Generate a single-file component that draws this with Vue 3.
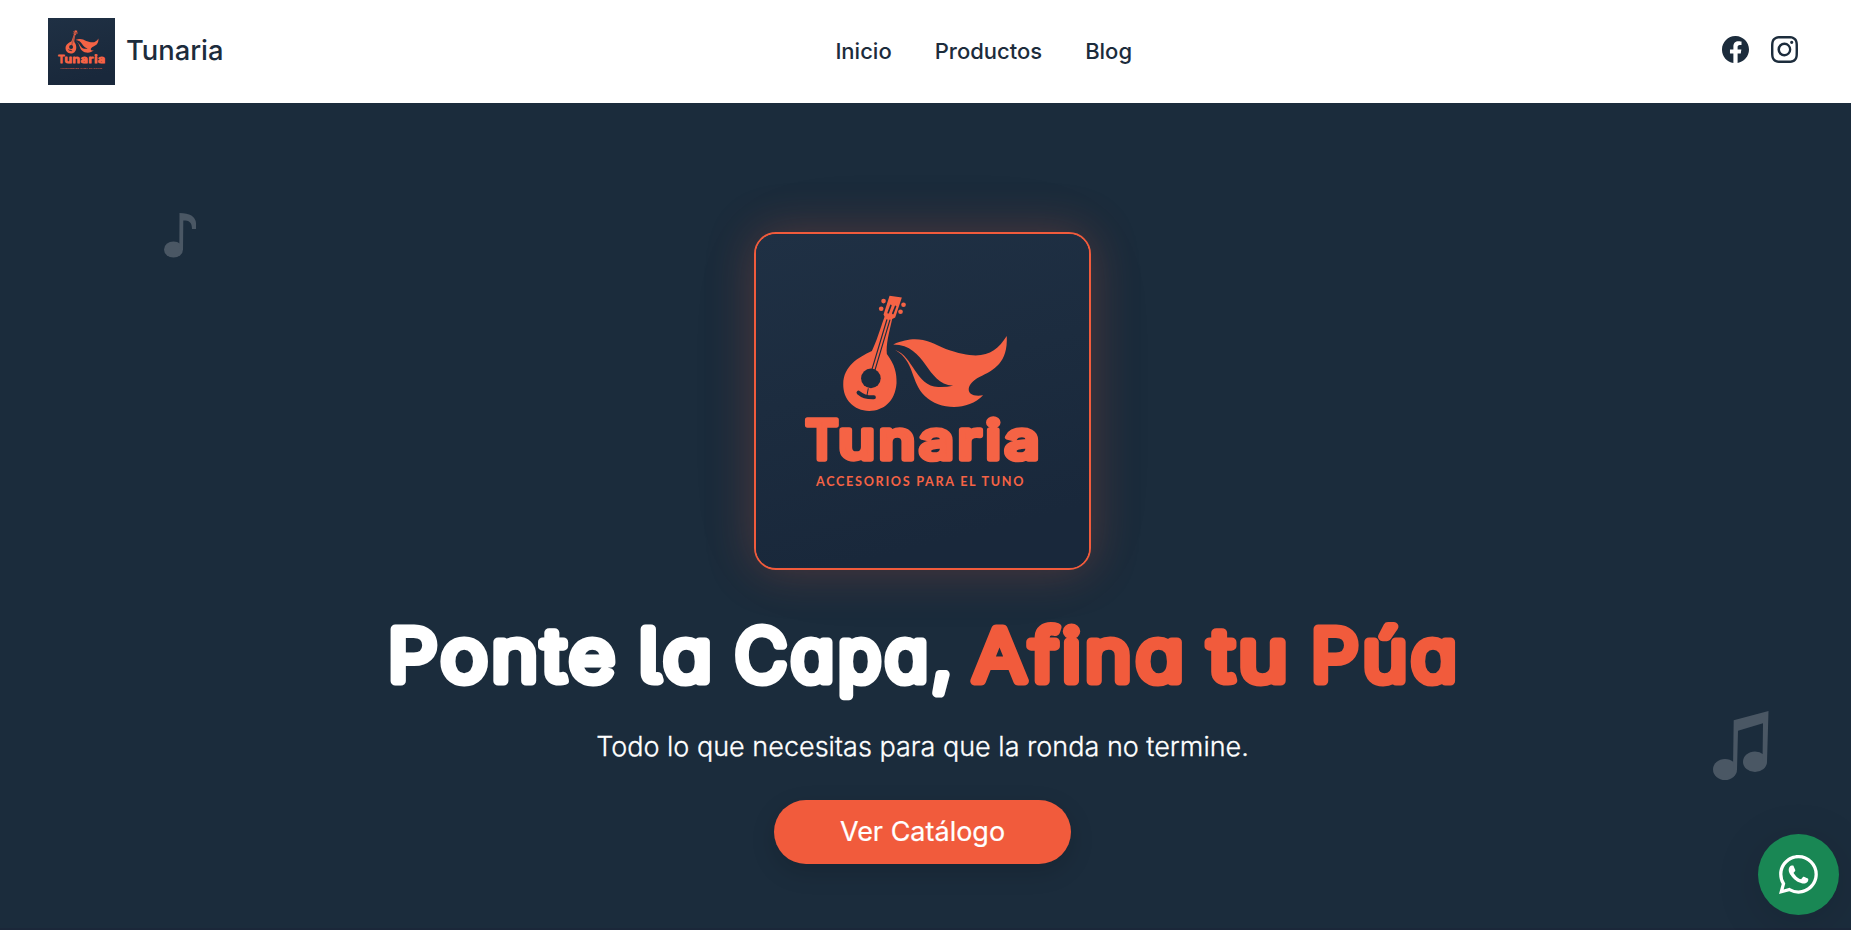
<script setup>
import { ref } from 'vue'

const links = ref(['Inicio', 'Productos', 'Blog'])

// Words of the hero title with their place on the title's baseline
const titleWords = [
  { text: 'Ponte', x: 15, width: 231 },
  { text: 'la', x: 266, width: 77 },
  { text: 'Capa,', x: 362, width: 221 },
  { text: 'Afina', x: 600, width: 215, accent: true },
  { text: 'tu', x: 836, width: 83, accent: true },
  { text: 'Púa', x: 938, width: 150, accent: true }
]
</script>

<template>
  <div class="page">
    <!-- Logo artwork shared by the navbar and the hero -->
    <svg class="defs" width="0" height="0" aria-hidden="true">
      <defs>
        <linearGradient id="logo-bg" x1="0" y1="0" x2="0.25" y2="1">
          <stop offset="0" stop-color="#1f3044" />
          <stop offset="0.5" stop-color="#1c2c3f" />
          <stop offset="1" stop-color="#19283b" />
        </linearGradient>
        <symbol id="logo" viewBox="0 0 1000 1000">
          <rect width="1000" height="1000" fill="url(#logo-bg)" />
          <g fill="#f56345">
            <path d="M401 184L438 189L418 249L409 254C399 298 390 330 393 359C417 391 423 417 422 447C418 501 383 530 340 530C293 529 261 495 262 449C263 395 306 370 348 350C362 321 371 289 386 247L383 240Z" />
            <circle cx="383" cy="200" r="7" /><circle cx="376" cy="223" r="7" />
            <circle cx="443" cy="211" r="7" /><circle cx="434" cy="232" r="7" />
            <path d="M412 330C484 299 520 321 570 344C677 382 717 361 753 305C757 386 715 407 671 428C627 450 626 492 682 483C636 531 552 528 507 485C464 444 477 380 418 347C472 365 480 456 547 458Q571 459 592 454C508 447 514 332 412 330Z" />
            <text x="148" y="675" class="logo-name" textLength="100" lengthAdjust="spacingAndGlyphs">T</text>
            <text x="246" y="675" class="logo-name spaced" textLength="616" lengthAdjust="spacingAndGlyphs">unaria</text>
            <text x="180" y="755" class="logo-tag" textLength="623">ACCESORIOS PARA EL TUNO</text>
          </g>
          <g fill="none" stroke="#1c2c3f" stroke-linecap="round">
            <path d="M405 213L397 235M419 216L411 237" stroke-width="5" />
            <path d="M393 256L348 406M402 257L357 408" stroke-width="3.5" />
            <path d="M337 463L333 485" stroke-width="3" />
            <path d="M308 475Q325 490 354 489" stroke-width="12" />
          </g>
          <circle cx="345" cy="432" r="29.500" fill="#1c2c3f" />
        </symbol>
      </defs>
    </svg>

    <header class="navbar">
      <a class="brand">
        <svg class="brand-logo"><use href="#logo" /></svg>
        <span>Tunaria</span>
      </a>
      <nav class="nav-links">
        <a v-for="link in links" :key="link">{{ link }}</a>
      </nav>
      <div class="social">
        <svg viewBox="0 0 16 16" fill="currentColor">
          <path d="M16 8.049c0-4.446-3.582-8.05-8-8.05C3.58 0-.002 3.603-.002 8.05c0 4.017 2.926 7.347 6.75 7.951v-5.625h-2.03V8.05H6.75V6.275c0-2.017 1.195-3.131 3.022-3.131.876 0 1.791.157 1.791.157v1.98h-1.009c-.993 0-1.303.621-1.303 1.258v1.51h2.218l-.354 2.326H9.25V16c3.824-.604 6.75-3.934 6.75-7.951" />
        </svg>
        <svg viewBox="0 0 16 16" fill="currentColor">
          <path d="M8 0C5.829 0 5.556.01 4.703.048 3.85.088 3.269.222 2.76.42a3.9 3.9 0 0 0-1.417.923A3.9 3.9 0 0 0 .42 2.76C.222 3.268.087 3.85.048 4.7.01 5.555 0 5.827 0 8.001c0 2.172.01 2.444.048 3.297.04.852.174 1.433.372 1.942.205.526.478.972.923 1.417.444.445.89.719 1.416.923.51.198 1.09.333 1.942.372C5.555 15.99 5.827 16 8 16s2.444-.01 3.298-.048c.851-.04 1.434-.174 1.943-.372a3.9 3.9 0 0 0 1.416-.923c.445-.445.718-.891.923-1.417.197-.509.332-1.09.372-1.942C15.99 10.445 16 10.173 16 8s-.01-2.445-.048-3.299c-.04-.851-.175-1.433-.372-1.941a3.9 3.9 0 0 0-.923-1.417A3.9 3.9 0 0 0 13.24.42c-.51-.198-1.092-.333-1.943-.372C10.443.01 10.172 0 7.998 0zm-.717 1.442h.718c2.136 0 2.389.007 3.232.046.78.035 1.204.166 1.486.275.373.145.64.319.92.599s.453.546.598.92c.11.281.24.705.275 1.485.039.843.047 1.096.047 3.231s-.008 2.389-.047 3.232c-.035.78-.166 1.203-.275 1.485a2.5 2.5 0 0 1-.599.919c-.28.28-.546.453-.92.598-.28.11-.704.24-1.485.276-.843.038-1.096.047-3.232.047s-2.39-.009-3.233-.047c-.78-.036-1.203-.166-1.485-.276a2.5 2.5 0 0 1-.92-.598 2.5 2.5 0 0 1-.6-.92c-.109-.281-.24-.705-.275-1.485-.038-.843-.046-1.096-.046-3.233s.008-2.388.046-3.231c.036-.78.166-1.204.276-1.486.145-.373.319-.64.599-.92s.546-.453.92-.598c.282-.11.705-.24 1.485-.276.738-.034 1.024-.044 2.515-.045zm4.988 1.328a.96.96 0 1 0 0 1.92.96.96 0 0 0 0-1.92m-4.27 1.122a4.109 4.109 0 1 0 0 8.217 4.109 4.109 0 0 0 0-8.217m0 1.441a2.667 2.667 0 1 1 0 5.334 2.667 2.667 0 0 1 0-5.334" />
        </svg>
      </div>
    </header>

    <main class="hero">
      <svg class="note note-single" viewBox="0 0 34 48" fill="currentColor">
        <ellipse cx="10.500" cy="37.500" rx="9.500" ry="8" />
        <path d="M16.500 1Q32 1 33 11V17H29C29 10 26 8.500 20.300 8.500L20 38H16.300Z" />
      </svg>
      <svg class="note note-double" viewBox="0 0 56 70" fill="currentColor">
        <ellipse cx="12" cy="58.500" rx="12" ry="10.500" />
        <ellipse cx="42" cy="50.700" rx="12" ry="10.300" />
        <path d="M20.700 9.300L55.500 0L54 51H49.500L50 12.300L25 19.700L24 59H20Z" />
      </svg>

      <svg class="hero-logo"><use href="#logo" /></svg>

      <h1 class="title">
        <svg viewBox="0 0 1100 104">
          <text
            v-for="word in titleWords"
            :key="word.text"
            :x="word.x"
            y="70"
            :textLength="word.width"
            lengthAdjust="spacingAndGlyphs"
            :class="{ accent: word.accent }"
          >{{ word.text }}</text>
        </svg>
      </h1>
      <p class="lead">Todo lo que necesitas para que la ronda no termine.</p>
      <a class="cta">Ver Catálogo</a>
    </main>

    <section class="next-section"></section>

    <a class="whatsapp">
      <svg viewBox="0 0 16 16" fill="currentColor">
        <path d="M13.601 2.326A7.85 7.85 0 0 0 7.994 0C3.627 0 .068 3.558.064 7.926c0 1.399.366 2.76 1.057 3.965L0 16l4.204-1.102a7.9 7.9 0 0 0 3.79.965h.004c4.368 0 7.926-3.558 7.93-7.93A7.9 7.9 0 0 0 13.6 2.326zM7.994 14.521a6.6 6.6 0 0 1-3.356-.92l-.24-.144-2.494.654.666-2.433-.156-.251a6.56 6.56 0 0 1-1.007-3.505c0-3.626 2.957-6.584 6.591-6.584a6.56 6.56 0 0 1 4.66 1.931 6.56 6.56 0 0 1 1.928 4.66c-.004 3.639-2.961 6.592-6.592 6.592m3.615-4.934c-.197-.099-1.17-.578-1.353-.646-.182-.065-.315-.099-.445.099-.133.197-.513.646-.627.775-.114.133-.232.148-.43.05-.197-.1-.836-.308-1.592-.985-.59-.525-.985-1.175-1.103-1.372-.114-.198-.011-.304.088-.403.087-.088.197-.232.296-.346.1-.114.133-.198.198-.33.065-.134.034-.248-.015-.347-.05-.099-.445-1.076-.612-1.47-.16-.389-.323-.335-.445-.34-.114-.007-.247-.007-.38-.007a.73.73 0 0 0-.529.247c-.182.198-.691.677-.691 1.654s.71 1.916.81 2.049c.098.133 1.394 2.132 3.383 2.992.47.205.84.326 1.129.418.475.152.904.129 1.246.08.38-.058 1.171-.48 1.338-.943.164-.464.164-.86.114-.943-.049-.084-.182-.133-.38-.232" />
      </svg>
    </a>
  </div>
</template>

<style>
body {
  margin: 0;
  overflow: hidden;
}
</style>

<style scoped>
.page {
  position: relative;
  height: 930px;
  display: flex;
  flex-direction: column;
  overflow: hidden;
  font-family: Inter, sans-serif;
  color: #1c2c3c;
  background: #1c2c3c;
}

.defs {
  position: absolute;
}

.navbar {
  height: 103px;
  box-sizing: border-box;
  padding: 0 53px 0 48px;
  display: flex;
  justify-content: space-between;
  align-items: center;
  background: #fff;
}

.brand {
  display: flex;
  align-items: center;
  gap: 11px;
  font-size: 27.3px;
  font-weight: 500;
}

.brand span {
  padding-bottom: 2px;
}

.brand-logo {
  width: 67px;
  height: 67px;
}

.nav-links {
  display: flex;
  gap: 43px;
  margin-left: 22px;
  padding-bottom: 2px;
  font-size: 22px;
  font-weight: 500;
}

.social {
  display: flex;
  gap: 22px;
  padding-bottom: 5px;
}

.social svg {
  width: 27px;
  height: 27px;
}

.hero {
  position: relative;
  height: 825px;
  box-sizing: border-box;
  padding: 129px 6px 0 0;
  display: flex;
  flex-direction: column;
  align-items: center;
  background: #1b2c3c;
}

.hero-logo {
  width: 333px;
  height: 334px;
  flex: none;
  border: 2px solid #f15b3c;
  border-radius: 22px;
  background: #1c2c3f;
  box-shadow: 0 0 48px rgba(241, 91, 60, 0.26), 0 0 100px rgba(0, 0, 0, 0.03);
}

.logo-name {
  font: 500 160px Inter, sans-serif;
  stroke: #f56345;
  stroke-width: 16;
  stroke-linejoin: round;
}

.logo-name.spaced {
  letter-spacing: 9px;
}

.logo-tag {
  font: 700 38px Lato, sans-serif;
}

.title {
  width: 1100px;
  height: 104px;
  margin: 41px 0 0;
}

.title svg {
  display: block;
  width: 1100px;
  height: 104px;
}

.title text {
  font: 300 72px Inter, sans-serif;
  font-feature-settings: "cv11", "cv05";
  letter-spacing: 4px;
  fill: #fff;
  stroke: #fff;
  stroke-width: 9px;
  stroke-linejoin: round;
}

.title text.accent {
  fill: #f15b3c;
  stroke: #f15b3c;
}

.lead {
  margin: 12px 0 0;
  font-size: 27px;
  font-weight: 300;
  line-height: 40px;
  color: #fff;
  -webkit-text-stroke: 0.3px #fff;
}

.cta {
  width: 297px;
  height: 64px;
  box-sizing: border-box;
  margin-top: 33px;
  padding-bottom: 2px;
  border-radius: 32px;
  display: flex;
  align-items: center;
  justify-content: center;
  font-size: 27px;
  color: #fff;
  background: #f15b3c;
  box-shadow: 0 8px 24px rgba(0, 0, 0, 0.15);
  -webkit-text-stroke: 0.2px #fff;
}

.note {
  position: absolute;
  color: #4a5764;
}

.note-single {
  left: 163px;
  top: 109px;
  width: 34px;
  height: 48px;
}

.note-double {
  left: 1713px;
  top: 608px;
  width: 56px;
  height: 70px;
}

.next-section {
  flex: 1;
  background: #1b2739;
}

.whatsapp {
  position: absolute;
  right: 12px;
  bottom: 15px;
  width: 81px;
  height: 81px;
  border-radius: 50%;
  display: flex;
  align-items: center;
  justify-content: center;
  color: #fff;
  background: #198754;
  box-shadow: 0 8px 48px rgba(0, 0, 0, 0.12);
}

.whatsapp svg {
  width: 39px;
  height: 39px;
}
</style>
